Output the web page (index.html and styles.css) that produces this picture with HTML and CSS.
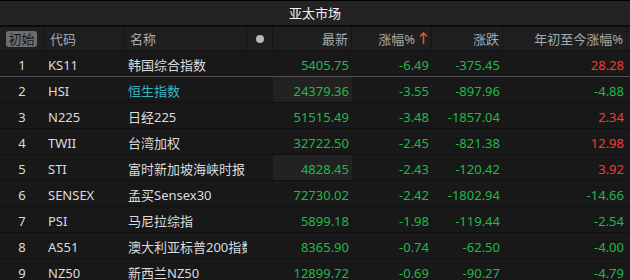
FILE: index.html
```html
<!DOCTYPE html>
<html lang="zh">
<head>
  <meta charset="UTF-8" />
  <title>亚太市场</title>
  <link rel="stylesheet" href="styles.css">
</head>
<body>
  <div class="panel">
    <div class="title-bar">亚太市场</div>

    <div class="grid head">
      <div class="cell c-no"><span class="btn-init">初始</span></div>
      <div class="cell c-code">代码</div>
      <div class="cell c-name">名称</div>
      <div class="cell c-dot"><span class="dot"></span></div>
      <div class="cell num">最新</div>
      <div class="cell num">涨幅%<span class="sort-arrow">
        <svg width="9" height="13" viewBox="0 0 9 13"><path d="M4.5 1 L4.5 12 M1 4.5 L4.5 1 L8 4.5" fill="none" stroke="#e0552f" stroke-width="1.6"/></svg>
      </span></div>
      <div class="cell num">涨跌</div>
      <div class="cell num">年初至今涨幅%</div>
    </div>

    <div class="rows">
      <div class="grid row selected">
        <div class="cell c-no">1</div><div class="cell c-code">KS11</div><div class="cell c-name">韩国综合指数</div><div class="cell"></div>
        <div class="cell num down">5405.75</div><div class="cell num down">-6.49</div><div class="cell num down">-375.45</div><div class="cell num up">28.28</div>
      </div>
      <div class="grid row">
        <div class="cell c-no">2</div><div class="cell c-code">HSI</div><div class="cell c-name link">恒生指数</div><div class="cell"></div>
        <div class="cell num down hl">24379.36</div><div class="cell num down">-3.55</div><div class="cell num down">-897.96</div><div class="cell num down">-4.88</div>
      </div>
      <div class="grid row">
        <div class="cell c-no">3</div><div class="cell c-code">N225</div><div class="cell c-name">日经225</div><div class="cell"></div>
        <div class="cell num down">51515.49</div><div class="cell num down">-3.48</div><div class="cell num down">-1857.04</div><div class="cell num up">2.34</div>
      </div>
      <div class="grid row">
        <div class="cell c-no">4</div><div class="cell c-code">TWII</div><div class="cell c-name">台湾加权</div><div class="cell"></div>
        <div class="cell num down">32722.50</div><div class="cell num down">-2.45</div><div class="cell num down">-821.38</div><div class="cell num up">12.98</div>
      </div>
      <div class="grid row">
        <div class="cell c-no">5</div><div class="cell c-code">STI</div><div class="cell c-name">富时新加坡海峡时报</div><div class="cell"></div>
        <div class="cell num down hl">4828.45</div><div class="cell num down">-2.43</div><div class="cell num down">-120.42</div><div class="cell num up">3.92</div>
      </div>
      <div class="grid row">
        <div class="cell c-no">6</div><div class="cell c-code">SENSEX</div><div class="cell c-name">孟买Sensex30</div><div class="cell"></div>
        <div class="cell num down">72730.02</div><div class="cell num down">-2.42</div><div class="cell num down">-1802.94</div><div class="cell num down">-14.66</div>
      </div>
      <div class="grid row">
        <div class="cell c-no">7</div><div class="cell c-code">PSI</div><div class="cell c-name">马尼拉综指</div><div class="cell"></div>
        <div class="cell num down">5899.18</div><div class="cell num down">-1.98</div><div class="cell num down">-119.44</div><div class="cell num down">-2.54</div>
      </div>
      <div class="grid row">
        <div class="cell c-no">8</div><div class="cell c-code">AS51</div><div class="cell c-name">澳大利亚标普200指数</div><div class="cell"></div>
        <div class="cell num down">8365.90</div><div class="cell num down">-0.74</div><div class="cell num down">-62.50</div><div class="cell num down">-4.00</div>
      </div>
      <div class="grid row">
        <div class="cell c-no">9</div><div class="cell c-code">NZ50</div><div class="cell c-name">新西兰NZ50</div><div class="cell"></div>
        <div class="cell num down">12899.72</div><div class="cell num down">-0.69</div><div class="cell num down">-90.27</div><div class="cell num down">-4.79</div>
      </div>
    </div>
  </div>
</body>
</html>
```

FILE: styles.css
```css
/* 基础 */
* { box-sizing: border-box; margin: 0; padding: 0; }
body {
  background: #181818;
  color: #dcdcdc;
  font-family: "Noto Sans", "Noto Sans CJK SC", sans-serif;
  font-size: 13px;
  overflow: hidden;
}
.panel { width: 630px; border-top: 1px solid #000; }

/* 标题栏 */
.title-bar {
  height: 26px;
  background: #232323;
  border-bottom: 2px solid #0c0c0c;
  color: #f2f2f2;
  font-size: 13px;
  line-height: 24px;
  text-align: center;
}

/* 网格列 */
.grid {
  display: grid;
  grid-template-columns: 44px 80px 123px 26px 79px 80px 71px 124px 3px;
}
.cell {
  white-space: nowrap;
  overflow: hidden;
  padding: 0 4px;
}
.num { text-align: right; padding-right: 3px; }

/* 表头 */
.head {
  height: 24px;
  background: #1f1f1f;
  border-bottom: 1px solid #121212;
  color: #a3abb3;
  line-height: 24px;
}
.head .cell { border-right: 1px solid #141414; }
.head .c-code, .head .c-name { padding-left: 6px; }
.head .c-no { text-align: center; padding: 0; }
.btn-init {
  display: inline-block;
  background: #6e6e6e;
  color: #151515;
  border-radius: 3px;
  line-height: 16px;
  padding: 0 2px;
  margin-top: 4px;
  vertical-align: top;
}
.head .c-dot { display: flex; align-items: center; justify-content: center; }
.dot { width: 8px; height: 8px; border-radius: 50%; background: #b8b8b8; }
.sort-arrow { display: inline-block; margin-left: 4px; vertical-align: -1px; }

/* 数据行 */
.row {
  height: 26px;
  grid-template-rows: 25px;
  line-height: 29px;
  border-bottom: 1px solid #101010;
}
.row.selected { border-bottom-color: #505050; }
.row .c-no { text-align: center; padding: 0; }
.c-name { padding-right: 0; }
.link { color: #38b6c4; }
.hl { background: #222222; }
.down { color: #22b848; }
.up { color: #f23a3a; }
```
